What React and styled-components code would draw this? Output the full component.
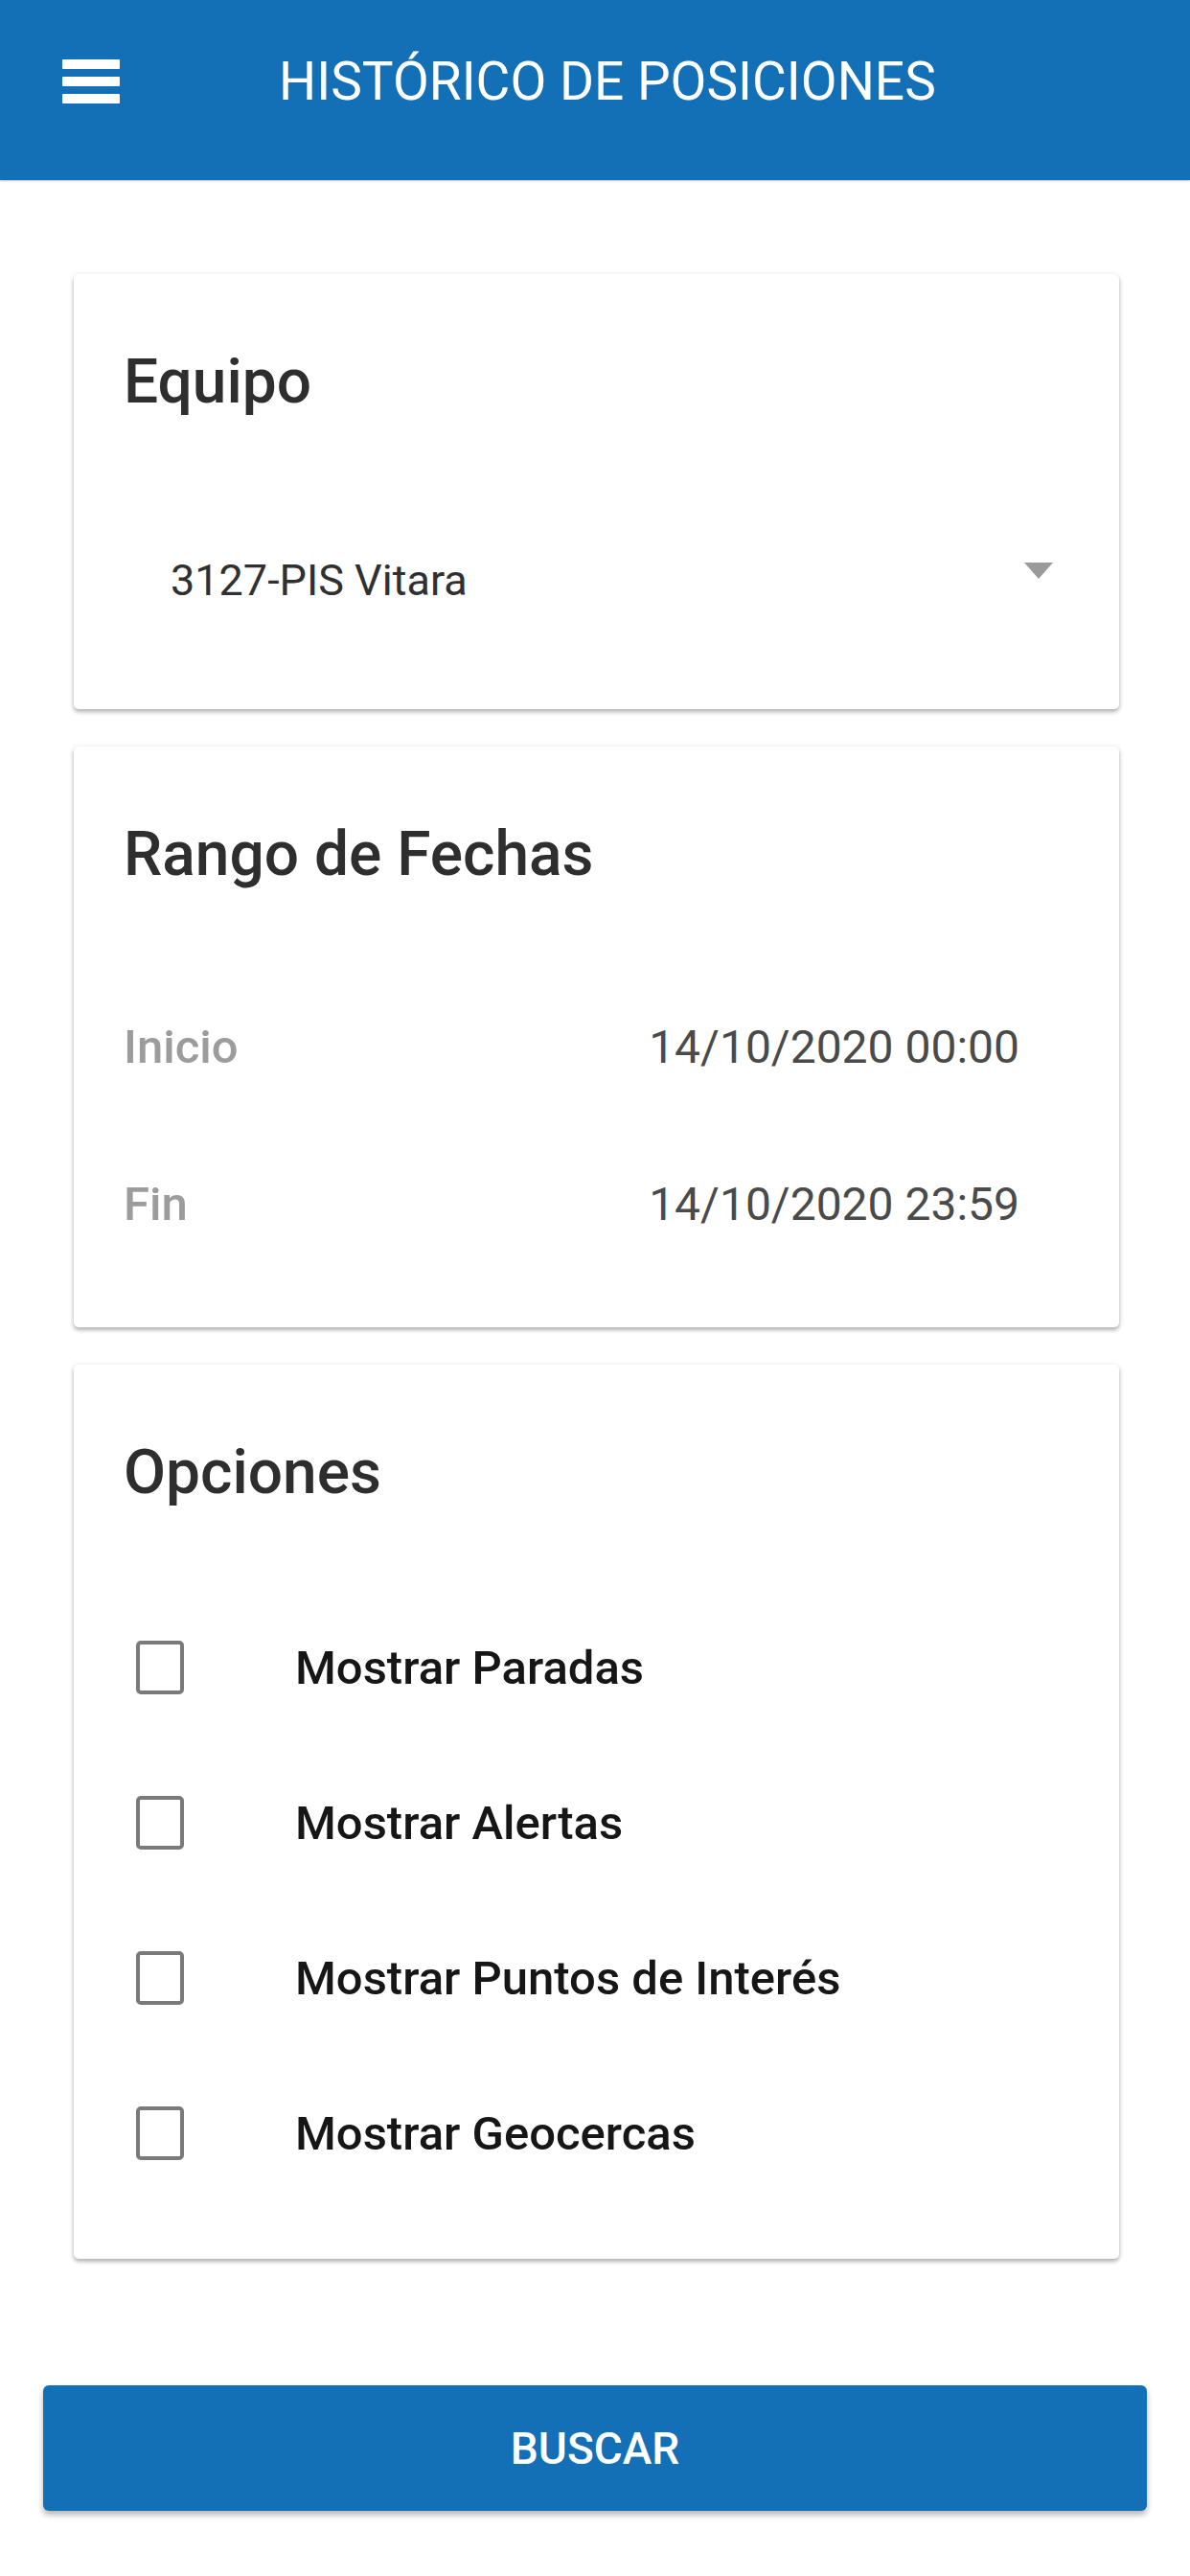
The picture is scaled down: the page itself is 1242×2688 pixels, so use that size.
import React from 'react'
import styled, { createGlobalStyle } from 'styled-components'

const GlobalStyle = createGlobalStyle`
  body {
    margin: 0;
    background: #ffffff;
    font-family: Roboto, 'Noto Sans', Arial, sans-serif;
  }
`

const options = [
  'Mostrar Paradas',
  'Mostrar Alertas',
  'Mostrar Puntos de Interés',
  'Mostrar Geocercas',
]

const App = () => {
  return (
    <Page>
      <GlobalStyle />
      <Header>
        <Toolbar>
          <MenuButton aria-label="menu">
            <Bar />
            <Bar />
            <Bar />
          </MenuButton>
          <Title>HISTÓRICO DE POSICIONES</Title>
        </Toolbar>
      </Header>

      <Main>
        <Card $bottom={85}>
          <CardTitle>Equipo</CardTitle>
          <SelectRow>
            <SelectValue>3127-PIS Vitara</SelectValue>
            <Caret />
          </SelectRow>
        </Card>

        <Card $bottom={47}>
          <CardTitle>Rango de Fechas</CardTitle>
          <List $top={78}>
            <DateRow>
              <DateLabel>Inicio</DateLabel>
              <DateValue>14/10/2020 00:00</DateValue>
            </DateRow>
            <DateRow>
              <DateLabel>Fin</DateLabel>
              <DateValue>14/10/2020 23:59</DateValue>
            </DateRow>
          </List>
        </Card>

        <Card $bottom={50}>
          <CardTitle>Opciones</CardTitle>
          <List $top={82}>
            {options.map((o) => (
              <OptionRow key={o}>
                <Checkbox />
                <OptionLabel>{o}</OptionLabel>
              </OptionRow>
            ))}
          </List>
        </Card>
      </Main>

      <Footer>
        <SearchButton>BUSCAR</SearchButton>
      </Footer>
    </Page>
  )
}

const Page = styled.div`
  width: 1242px;
  min-height: 2688px;
  background: #ffffff;
`

const Header = styled.header`
  background: #1470b6;
  height: 188px;
  padding-bottom: 18px;
  box-sizing: border-box;
  box-shadow: 0 1px 2px rgba(0, 0, 0, 0.2);
`

const Toolbar = styled.div`
  height: 170px;
  display: flex;
  align-items: center;
`

const MenuButton = styled.div`
  width: 60px;
  height: 46px;
  margin-left: 65px;
  display: flex;
  flex-direction: column;
  justify-content: space-between;
`

const Bar = styled.span`
  display: block;
  height: 10px;
  background: #ffffff;
  border-radius: 1px;
`

const Title = styled.h1`
  margin: 0 0 0 166px;
  font-family: Roboto, sans-serif;
  font-weight: 400;
  font-size: 55px;
  line-height: 70px;
  color: #ffffff;
`

const Main = styled.main`
  padding: 98px 74px 0 77px;
  display: flex;
  flex-direction: column;
  gap: 39px;
`

const Card = styled.section`
  background: #ffffff;
  border-radius: 5px;
  padding: 73px 0 ${(p) => p.$bottom}px 0;
  box-shadow: 0 3px 4px rgba(0, 0, 0, 0.28), 0 0 6px rgba(0, 0, 0, 0.08);
`

const CardTitle = styled.h2`
  margin: 0;
  padding-left: 52px;
  font-family: Roboto, sans-serif;
  font-weight: 500;
  font-size: 64px;
  line-height: 80px;
  color: #2e2e2e;
`

const SelectRow = styled.div`
  margin-top: 116px;
  height: 100px;
  padding: 0 69px 0 101px;
  display: flex;
  align-items: center;
  justify-content: space-between;
`

const SelectValue = styled.span`
  font-family: Roboto, sans-serif;
  font-size: 45px;
  color: #303030;
`

const Caret = styled.span`
  width: 0;
  height: 0;
  border-left: 15px solid transparent;
  border-right: 15px solid transparent;
  border-top: 17px solid #9a9a9a;
  margin-top: -20px;
`

const List = styled.div`
  margin-top: ${(p) => p.$top}px;
  display: flex;
  flex-direction: column;
`

const DateRow = styled.div`
  height: 164px;
  padding: 0 104px 0 52px;
  display: flex;
  align-items: center;
  justify-content: space-between;
`

const DateLabel = styled.span`
  font-family: Roboto, sans-serif;
  font-weight: 500;
  font-size: 49px;
  color: #9c9c9c;
`

const DateValue = styled.span`
  font-family: Roboto, sans-serif;
  font-weight: 400;
  font-size: 48px;
  color: #4a4a4a;
`

const OptionRow = styled.label`
  height: 162px;
  padding-left: 65px;
  display: flex;
  align-items: center;
`

const Checkbox = styled.span`
  width: 50px;
  height: 56px;
  box-sizing: border-box;
  border: 4px solid #7a7a7a;
  border-radius: 5px;
  flex-shrink: 0;
`

const OptionLabel = styled.span`
  margin-left: 116px;
  font-family: Roboto, sans-serif;
  font-weight: 500;
  font-size: 49px;
  color: #161616;
`

const Footer = styled.div`
  padding: 132px 45px 0;
`

const SearchButton = styled.button`
  width: 100%;
  height: 131px;
  border: none;
  border-radius: 6px;
  background: #1470b6;
  color: #ffffff;
  font-family: Roboto, sans-serif;
  font-weight: 500;
  font-size: 46px;
  box-shadow: 0 4px 6px rgba(0, 0, 0, 0.3);
`

export default App
